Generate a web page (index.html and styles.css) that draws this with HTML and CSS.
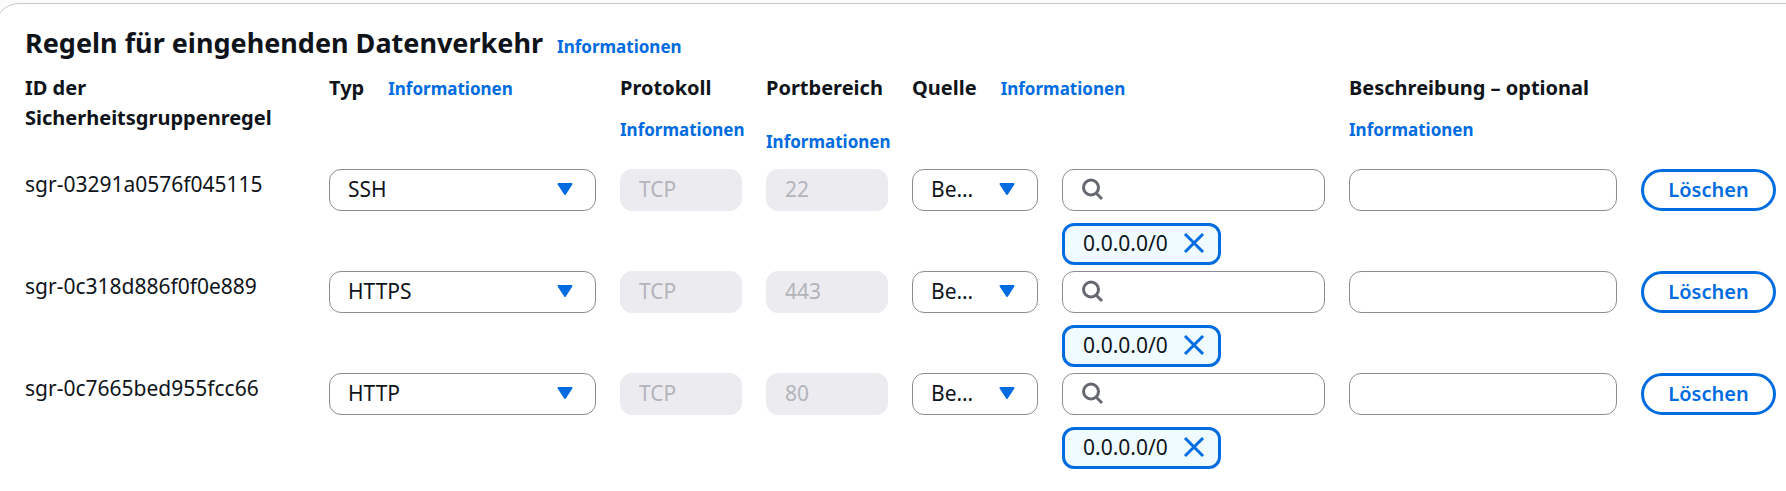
FILE: index.html
```html
<!DOCTYPE html>
<html lang="de">
<head>
<meta charset="utf-8">
<title>Regeln für eingehenden Datenverkehr</title>
<link rel="stylesheet" href="styles.css">
</head>
<body>
<svg class="sprite" aria-hidden="true">
  <symbol id="search" viewBox="0 0 24 24"><g fill="none" stroke="currentColor" stroke-width="3"><circle cx="10" cy="9.500" r="7.500"/><path d="M15.300 15.300 21 21"/></g></symbol>
  <symbol id="close" viewBox="0 0 24 24"><path d="M3 3 21 21M21 3 3 21" fill="none" stroke="currentColor" stroke-width="3"/></symbol>
  <symbol id="caret" viewBox="0 0 16 12"><path d="M1.500 1h13L8 11z" fill="currentColor" stroke="currentColor" stroke-width="2" stroke-linejoin="round"/></symbol>
</svg>
<main class="panel">
  <header class="panel-header">
    <h2 class="panel-title">Regeln für eingehenden Datenverkehr</h2>
    <a class="info" href="#">Informationen</a>
  </header>
  <table class="rules">
    <colgroup>
      <col class="col-id"><col class="col-type"><col class="col-short"><col class="col-short"><col class="col-mode"><col class="col-search"><col class="col-text"><col class="col-action">
    </colgroup>
    <thead>
      <tr>
        <th scope="col">ID der Sicherheitsgruppenregel</th>
        <th scope="col"><span class="inline-head">Typ <a class="info" href="#">Informationen</a></span></th>
        <th scope="col"><span class="stack-head">Protokoll <a class="info" href="#">Informationen</a></span></th>
        <th scope="col"><span class="stack-head stack-head-wide">Portbereich <a class="info" href="#">Informationen</a></span></th>
        <th scope="col" colspan="2"><span class="inline-head">Quelle <a class="info" href="#">Informationen</a></span></th>
        <th scope="col"><span class="stack-head">Beschreibung – optional <a class="info" href="#">Informationen</a></span></th>
        <td></td>
      </tr>
    </thead>
    <tbody>
      <tr>
        <td class="rule-id">sgr-03291a0576f045115</td>
        <td><div class="select"><select aria-label="Typ"><option>SSH</option></select><svg class="caret"><use href="#caret"/></svg></div></td>
        <td><input class="field" aria-label="Protokoll" value="TCP" disabled></td>
        <td><input class="field" aria-label="Portbereich" value="22" disabled></td>
        <td><div class="select"><select aria-label="Quelle"><option>Be…</option></select><svg class="caret"><use href="#caret"/></svg></div></td>
        <td><label class="search"><svg class="icon"><use href="#search"/></svg><input type="search" aria-label="Quelle suchen"></label>
          <div class="token"><span>0.0.0.0/0</span><button type="button" aria-label="Entfernen"><svg class="icon"><use href="#close"/></svg></button></div></td>
        <td><input class="field" aria-label="Beschreibung"></td>
        <td><button class="delete" type="button">Löschen</button></td>
      </tr>
      <tr>
        <td class="rule-id">sgr-0c318d886f0f0e889</td>
        <td><div class="select"><select aria-label="Typ"><option>HTTPS</option></select><svg class="caret"><use href="#caret"/></svg></div></td>
        <td><input class="field" aria-label="Protokoll" value="TCP" disabled></td>
        <td><input class="field" aria-label="Portbereich" value="443" disabled></td>
        <td><div class="select"><select aria-label="Quelle"><option>Be…</option></select><svg class="caret"><use href="#caret"/></svg></div></td>
        <td><label class="search"><svg class="icon"><use href="#search"/></svg><input type="search" aria-label="Quelle suchen"></label>
          <div class="token"><span>0.0.0.0/0</span><button type="button" aria-label="Entfernen"><svg class="icon"><use href="#close"/></svg></button></div></td>
        <td><input class="field" aria-label="Beschreibung"></td>
        <td><button class="delete" type="button">Löschen</button></td>
      </tr>
      <tr>
        <td class="rule-id">sgr-0c7665bed955fcc66</td>
        <td><div class="select"><select aria-label="Typ"><option>HTTP</option></select><svg class="caret"><use href="#caret"/></svg></div></td>
        <td><input class="field" aria-label="Protokoll" value="TCP" disabled></td>
        <td><input class="field" aria-label="Portbereich" value="80" disabled></td>
        <td><div class="select"><select aria-label="Quelle"><option>Be…</option></select><svg class="caret"><use href="#caret"/></svg></div></td>
        <td><label class="search"><svg class="icon"><use href="#search"/></svg><input type="search" aria-label="Quelle suchen"></label>
          <div class="token"><span>0.0.0.0/0</span><button type="button" aria-label="Entfernen"><svg class="icon"><use href="#close"/></svg></button></div></td>
        <td><input class="field" aria-label="Beschreibung"></td>
        <td><button class="delete" type="button">Löschen</button></td>
      </tr>
    </tbody>
  </table>
</main>
</body>
</html>
```
FILE: styles.css
```css
* { box-sizing: border-box; }
html { background: #fff; }
body {
  margin: 0;
  padding-top: 3px;
  overflow: hidden;
  background: #fbfbfb;
  color: #0f141a;
  font: 21px/30px "Noto Sans", "Open Sans", sans-serif;
}
.sprite { position: absolute; width: 0; height: 0; }
.panel {
  margin: 0 -30px 0 -5px;
  padding: 21px 39px 30px 29px;
  min-height: 100vh;
  background: #fff;
  border: 1px solid #c6c6cd;
  border-radius: 24px;
}
.panel-header { display: flex; align-items: baseline; gap: 14px; }
.panel-title { margin: 0; font-size: 27px; line-height: 36px; font-weight: 700; }
.info { color: #006ce0; font-size: 17px; font-weight: 700; text-decoration: none; }

.rules { width: 100%; margin-top: 11px; table-layout: fixed; border-collapse: collapse; }
.col-id { width: 304px; }
.col-type { width: 291px; }
.col-short { width: 146px; }
.col-mode { width: 150px; }
.col-search { width: 287px; }
.col-text { width: 292px; }
.col-action { width: 135px; }
th, td { padding: 0 24px 0 0; text-align: left; vertical-align: top; }
tr > :last-child { padding-right: 0; }
th { height: 96px; font-size: 20px; font-weight: 700; }
.inline-head { display: flex; gap: 24px; align-items: baseline; }
.stack-head { display: flex; flex-direction: column; gap: 12px; white-space: nowrap; }
.stack-head-wide { gap: 24px; }
tbody td { height: 102px; }
.rule-id { white-space: nowrap; }

.field, .search, .select select {
  width: 100%;
  height: 42px;
  border: 1px solid #8c8c94;
  border-radius: 12px;
  background: #fff;
  color: inherit;
  font: inherit;
}
.field { display: block; padding: 0 18px 2px; }
.field:disabled { background: #ebebf0; border-color: #ebebf0; color: #b4b4bb; }
.select { position: relative; }
.select select { display: block; appearance: none; padding: 0 40px 2px 18px; }
.caret { position: absolute; right: 23px; top: 14px; width: 16px; height: 12px; color: #006ce0; pointer-events: none; }
.search { display: flex; align-items: center; gap: 10px; padding: 0 18px; }
.search input { flex: 1; min-width: 0; border: 0; outline: 0; background: none; font: inherit; }
.icon { display: block; flex: none; width: 24px; height: 24px; color: #656871; }
.token {
  display: flex;
  align-items: center;
  gap: 14px;
  width: max-content;
  height: 42px;
  margin-top: 12px;
  padding: 0 12px 2px 18px;
  border: 3px solid #006ce0;
  border-radius: 12px;
  background: #f0fbff;
}
.token button { padding: 0; border: 0; background: none; }
.token .icon { color: #006ce0; }
.delete {
  display: block;
  width: 100%;
  height: 42px;
  padding: 0 0 2px;
  border: 3px solid #006ce0;
  border-radius: 30px;
  background: #fff;
  color: #006ce0;
  font-family: inherit;
  font-size: 20px;
  font-weight: 600;
}
```
